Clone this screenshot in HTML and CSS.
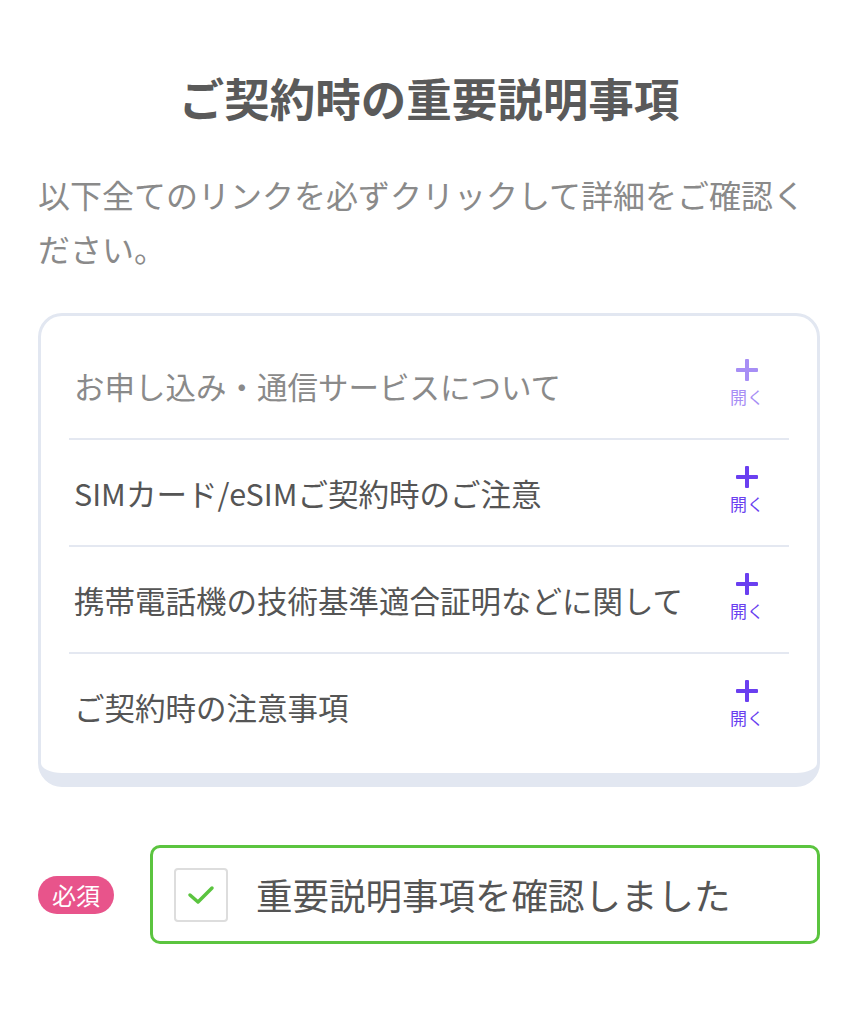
FILE: index.html
```html
<!DOCTYPE html>
<html lang="ja">
<head>
  <meta charset="UTF-8">
  <title>ご契約時の重要説明事項</title>
  <link rel="stylesheet" href="styles.css">
</head>
<body>

  <h1 class="title">ご契約時の重要説明事項</h1>
  <p class="lead">以下全てのリンクを必ずクリックして詳細をご確認ください。</p>

  <!-- リンク一覧 -->
  <div class="links">
    <div class="link-row done">
      <span class="link-text">お申し込み・通信サービスについて</span>
      <span class="open"><span class="plus"></span>開く</span>
    </div>
    <div class="link-row">
      <span class="link-text">SIMカード/eSIMご契約時のご注意</span>
      <span class="open"><span class="plus"></span>開く</span>
    </div>
    <div class="link-row">
      <span class="link-text">携帯電話機の技術基準適合証明などに関して</span>
      <span class="open"><span class="plus"></span>開く</span>
    </div>
    <div class="link-row">
      <span class="link-text">ご契約時の注意事項</span>
      <span class="open"><span class="plus"></span>開く</span>
    </div>
  </div>

  <!-- 同意チェック -->
  <div class="agree">
    <span class="badge">必須</span>
    <label class="check">
      <span class="box">
        <svg width="30" height="24" viewBox="0 0 30 24">
          <path d="M4 12 L12 19 L26 5" fill="none" stroke="#5bc43f" stroke-width="3.5" stroke-linecap="round" stroke-linejoin="round"/>
        </svg>
      </span>
      <span class="check-text">重要説明事項を確認しました</span>
    </label>
  </div>

</body>
</html>
```

FILE: styles.css
```css
body {
  font-family: "Noto Sans CJK JP", "Noto Sans", sans-serif;
  background: #ffffff;
  color: #555555;
  margin: 0;
  padding: 0 38px;
}

.title {
  font-size: 45.5px;
  font-weight: bold;
  color: #5a5a5a;
  text-align: center;
  line-height: 62px;
  margin: 66px 0 0;
}

.lead {
  font-size: 32px;
  line-height: 54px;
  color: #8a8a8a;
  margin: 39px 0 0;
}

.links {
  margin-top: 38px;
  background: #fff;
  border: 3px solid #e2e7f1;
  border-bottom-width: 14px;
  border-radius: 24px;
  padding: 17px 28px 14px;
}

.link-row {
  display: flex;
  align-items: center;
  justify-content: space-between;
  height: 105px;
  border-bottom: 2px solid #e4e8f1;
  padding: 0 4px 0 5px;
}

.link-row:last-child {
  border-bottom: none;
}

.link-text {
  font-size: 30.5px;
  color: #555555;
}

.open {
  display: flex;
  flex-direction: column;
  align-items: center;
  width: 50px;
  margin-right: 13px;
  margin-top: -4px;
  font-size: 17px;
  line-height: 22px;
  color: #6a3ff0;
}

.plus {
  position: relative;
  width: 22px;
  height: 22px;
  margin-bottom: 5px;
}

.plus::before,
.plus::after {
  content: "";
  position: absolute;
  background: #6a3ff0;
  border-radius: 1px;
}

.plus::before {
  left: 0;
  top: 9px;
  width: 22px;
  height: 4px;
}

.plus::after {
  left: 9px;
  top: 0;
  width: 4px;
  height: 22px;
}

.done .link-text {
  color: #8a8a8a;
}

.done .open {
  color: #a78ef5;
}

.done .plus::before,
.done .plus::after {
  background: #a78ef5;
}

.agree {
  display: flex;
  align-items: center;
  gap: 36px;
  margin-top: 58px;
}

.badge {
  background: #e8548b;
  color: #fff;
  font-size: 24px;
  line-height: 38px;
  padding: 0 14px;
  border-radius: 19px;
}

.check {
  flex: 1;
  display: flex;
  align-items: center;
  gap: 28px;
  height: 93px;
  border: 3px solid #5bc43f;
  border-radius: 10px;
  padding: 0 21px;
}

.box {
  display: flex;
  align-items: center;
  justify-content: center;
  width: 50px;
  height: 50px;
  border: 2px solid #dddddd;
  border-radius: 4px;
}

.check-text {
  font-size: 36.5px;
  color: #555555;
}
```
